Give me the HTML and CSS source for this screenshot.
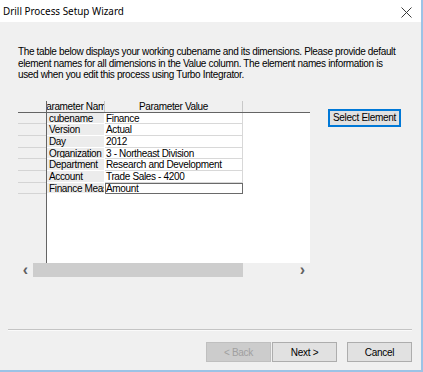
FILE: index.html
```html
<!DOCTYPE html>
<html>
<head>
<meta charset="utf-8">
<link rel="stylesheet" href="styles.css">
</head>
<body>
<div class="window">
  <div class="titlebar">
    <span class="title">Drill Process Setup Wizard</span>
    <svg class="close" width="11" height="11" viewBox="0 0 11 11"><path d="M0.5 0.5 L10.5 10.5 M10.5 0.5 L0.5 10.5" stroke="#3a3a3a" stroke-width="1" fill="none"/></svg>
  </div>
  <div class="content">
    <p class="intro">The table below displays your working cubename and its dimensions. Please provide default element names for all dimensions in the Value column. The element names information is used when you edit this process using Turbo Integrator.</p>
    <div class="main">
      <div class="grid">
        <div class="ghead">
          <div class="hcell corner"></div>
          <div class="hcell hname"><span>Parameter Name</span></div>
          <div class="hcell hvalue"><span>Parameter Value</span></div>
          <div class="hcell hrest"></div>
        </div>
        <div class="gbody">
          <div class="rowheads">
            <div class="rh"></div><div class="rh"></div><div class="rh"></div><div class="rh"></div><div class="rh"></div><div class="rh"></div><div class="rh"></div>
          </div>
          <div class="cells">
            <div class="row"><div class="name">cubename</div><div class="val">Finance</div></div>
            <div class="row"><div class="name">Version</div><div class="val">Actual</div></div>
            <div class="row"><div class="name">Day</div><div class="val">2012</div></div>
            <div class="row"><div class="name">Organization</div><div class="val">3 - Northeast Division</div></div>
            <div class="row"><div class="name">Department</div><div class="val">Research and Development</div></div>
            <div class="row"><div class="name">Account</div><div class="val">Trade Sales - 4200</div></div>
            <div class="row"><div class="name">Finance Measure</div><div class="val edit">Amount</div></div>
          </div>
        </div>
        <div class="hscroll">
          <span class="arrow">&#8249;</span>
          <div class="thumb"></div>
          <span class="arrow right">&#8250;</span>
        </div>
      </div>
      <button class="btn select">Select Element</button>
    </div>
    <div class="sep"></div>
    <div class="buttons">
      <button class="btn disabled">&lt; Back</button>
      <button class="btn">Next &gt;</button>
      <button class="btn cancel">Cancel</button>
    </div>
  </div>
</div>
</body>
</html>
```
FILE: styles.css
```css
html, body { margin: 0; padding: 0; }
body { background: #ffffff; }
.window {
  width: 421px;
  height: 370px;
  border-right: 2px solid #9cc3e6;
  border-bottom: 2px solid #9cc3e6;
  background: #f0f0f0;
  font-family: "Liberation Sans", Arial, sans-serif;
  font-size: 10px;
  letter-spacing: -0.35px;
  color: #000;
  display: flex;
  flex-direction: column;
}
.titlebar {
  height: 22px;
  background: #fff;
  display: flex;
  align-items: center;
  justify-content: space-between;
  padding: 0 9px 0 3px;
  letter-spacing: 0;
}
.title {
  font-family: "Noto Sans", sans-serif;
  font-size: 9.9px;
  color: #000;
}
.close { margin-top: 2px; }
.content { flex: 1; display: flex; flex-direction: column; }
.intro {
  margin: 24px 20px 0 18px;
  line-height: 11.5px;
}
.main { display: flex; margin-top: 20px; }
.grid { margin-left: 18px; width: 292px; }
.ghead {
  display: flex;
  height: 11px;
  border-bottom: 1px solid #646464;
  background: #f0f0f0;
}
.hcell {
  height: 11px;
  overflow: hidden;
  display: flex;
  justify-content: center;
  align-items: center;
  white-space: nowrap;
  line-height: 11px;
}
.corner { width: 28px; border-right: 1px solid #646464; }
.hname { width: 57px; border-right: 1px solid #c8c8c8; }
.hvalue { width: 137px; border-right: 1px solid #c8c8c8; }
.hrest { flex: 1; }
.gbody { display: flex; height: 150px; }
.rowheads { width: 28px; border-right: 1px solid #646464; }
.rh { height: 10.7px; border-bottom: 1px solid #d4d4d4; background: #f0f0f0; }
.cells { flex: 1; background: #fff; }
.row { display: flex; height: 11.7px; }
.name {
  box-sizing: border-box;
  width: 58px;
  padding-left: 2px;
  background: #ececec;
  border-right: 1px solid #fff;
  border-bottom: 1px solid #fff;
  overflow: hidden;
  white-space: nowrap;
  line-height: 11px;
}
.val {
  width: 138px;
  box-sizing: border-box;
  padding-left: 1px;
  border-right: 1px solid #d8d8d8;
  border-bottom: 1px solid #d8d8d8;
  white-space: nowrap;
  overflow: hidden;
  line-height: 11px;
}
.val.edit { border: 1.5px solid #6a6a6a; border-top-width: 1px; line-height: 10px; padding-left: 0; }
.hscroll {
  height: 15px;
  display: flex;
  align-items: center;
  background: #f0f0f0;
}
.arrow {
  width: 15px;
  text-align: center;
  font-size: 16px;
  font-weight: bold;
  color: #606060;
  line-height: 15px;
  margin-top: -2px;
  letter-spacing: 0;
}
.thumb { width: 210px; height: 14px; background: #cdcdcd; }
.arrow.right { margin-left: auto; }
.btn {
  font-family: "Liberation Sans", Arial, sans-serif;
  font-size: 10px;
  letter-spacing: -0.3px;
  color: #000;
  background: #e1e1e1;
  border: 1px solid #adadad;
  padding: 0;
  margin: 0;
  white-space: nowrap;
}
.select {
  margin: 8px 0 0 18px;
  width: 73px;
  height: 18px;
  border: 2px solid #0078d7;
  box-shadow: inset 0 0 0 1px #e1e1e1;
}
.sep {
  margin: 51.5px 9px 0 8px;
  height: 1px;
  background: #c4c4c4;
  border-bottom: 1px solid #fafafa;
}
.buttons {
  display: flex;
  justify-content: flex-end;
  padding-right: 9px;
  margin-top: 11px;
  gap: 1px;
}
.buttons .btn { width: 65px; height: 20px; }
.disabled { background: #cccccc; color: #a0a0a0; border-color: #bfbfbf; }
.cancel { margin-left: 9px; }
```
